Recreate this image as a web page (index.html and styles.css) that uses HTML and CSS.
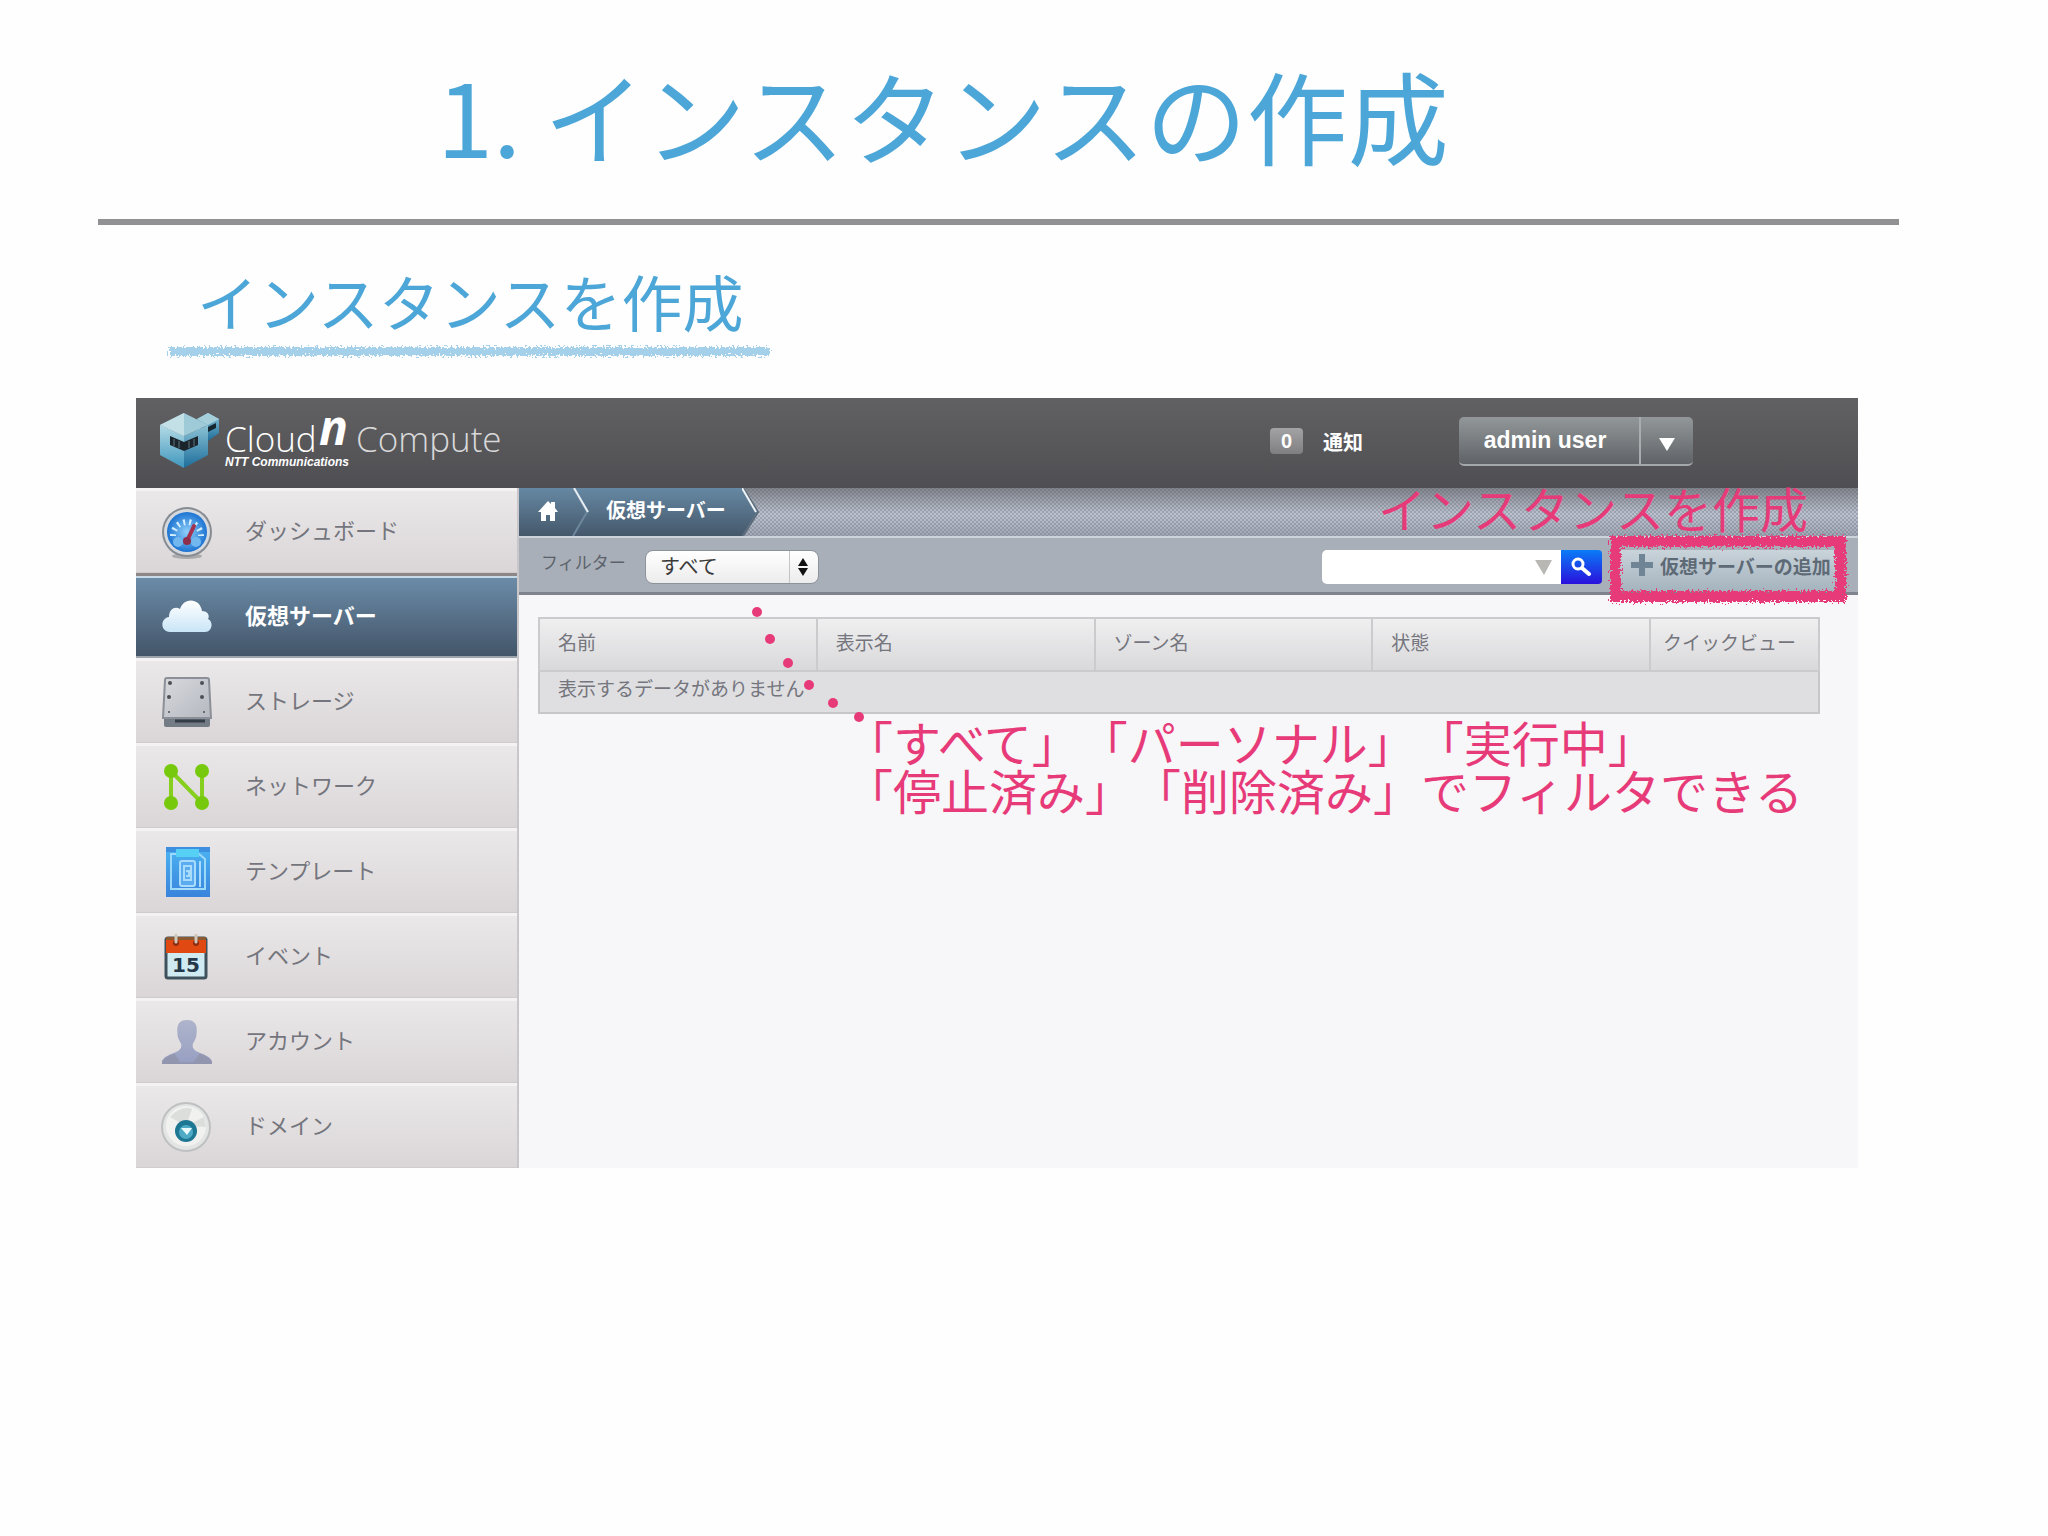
FILE: index.html
```html
<!DOCTYPE html>
<html lang="ja">

<head>
    <meta charset="UTF-8">
    <meta name="viewport" content="width=device-width, initial-scale=1.0">
    <title>1. インスタンスの作成</title>
    <link rel="stylesheet" href="styles.css">
</head>

<body>
    <!-- 手描き風の輪郭を作るフィルター -->
    <svg class="defs" width="0" height="0" aria-hidden="true">
        <filter id="crayon" x="-5%" y="-20%" width="110%" height="140%">
            <feTurbulence type="fractalNoise" baseFrequency="0.5" numOctaves="2" seed="4" result="noise" />
            <feDisplacementMap in="SourceGraphic" in2="noise" scale="11" xChannelSelector="R" yChannelSelector="G" />
        </filter>
    </svg>

    <main class="slide">
        <h1>1. インスタンスの作成</h1>
        <hr>
        <h2>インスタンスを作成</h2>

        <div class="panel">
            <header class="header">
                <div class="logo">
                    <svg class="cube" width="62" height="58" viewBox="0 0 62 58">
                        <defs>
                            <linearGradient id="cubeL" x1="0" y1="0" x2="0" y2="1">
                                <stop offset="0" stop-color="#b5dbe6" />
                                <stop offset="1" stop-color="#3f97bd" />
                            </linearGradient>
                            <linearGradient id="cubeR" x1="0" y1="0" x2="0" y2="1">
                                <stop offset="0" stop-color="#8cc3d6" />
                                <stop offset="1" stop-color="#1c6d9b" />
                            </linearGradient>
                        </defs>
                        <path d="M49 1 60 7v14l-11 8-11-8V7z" fill="url(#cubeR)" />
                        <path d="M49 1 60 7l-11 6-11-6z" fill="#a5cedb" />
                        <path d="M41 11l8 4 8-4v5l-8 4-8-4z" fill="#16262f" />
                        <path d="M1 13 25 24v32L1 43z" fill="url(#cubeL)" />
                        <path d="M49 13 25 24v32l24-13z" fill="url(#cubeR)" />
                        <path d="M25 1 49 13 25 24 1 13z" fill="#9fcbd8" />
                        <path d="M25 1 1 13l24 11z" fill="#c4e0e7" />
                        <path d="M11 24l14 6 14-6v9l-14 6-14-6z" fill="#1b242a" />
                        <path d="M15 27v7M20 29v7M30 29v7M35 27v7" stroke="#5f7782" stroke-width="1" />
                    </svg>
                    <div class="brand">
                        <span class="cloud">Cloud</span>
                        <span class="company">NTT Communications</span>
                    </div>
                    <span class="n">n</span>
                    <span class="product">Compute</span>
                </div>
                <div class="notice"><span class="count">0</span>通知</div>
                <div class="user">
                    <button type="button" class="user-name">admin user</button>
                    <button type="button" class="user-menu" aria-label="メニュー">
                        <svg width="16" height="14" viewBox="0 0 16 14"><path d="M0 1h16L8 14z" fill="#fff" /></svg>
                    </button>
                </div>
            </header>

            <div class="body">
                <nav class="sidebar">
                    <a href="#">
                        <svg width="52" height="54" viewBox="0 0 52 54">
                            <defs>
                                <radialGradient id="dial">
                                    <stop offset="0" stop-color="#8fd0fa" />
                                    <stop offset="1" stop-color="#1d74d2" />
                                </radialGradient>
                            </defs>
                            <ellipse cx="26" cy="51" rx="15" ry="3" fill="#aaa" />
                            <circle cx="26" cy="27" r="25" fill="#868b92" />
                            <circle cx="26" cy="27" r="23" fill="#d6dade" />
                            <circle cx="26" cy="27" r="20" fill="url(#dial)" />
                            <path d="M12 31a14 14 0 1 1 28 0" fill="none" stroke="#d3eeff" stroke-width="6" stroke-dasharray="2 4" />
                            <circle cx="17" cy="37" r="5" fill="#72b7ee" />
                            <circle cx="35" cy="37" r="5" fill="#72b7ee" />
                            <path d="M26 36l7-15" stroke="#a4324f" stroke-width="4" stroke-linecap="round" />
                            <circle cx="26" cy="36" r="4" fill="#8e2e4b" />
                        </svg>
                        <span>ダッシュボード</span>
                    </a>
                    <a href="#" class="active">
                        <svg width="52" height="34" viewBox="0 0 52 34">
                            <defs>
                                <linearGradient id="cloud" x1="0" y1="0" x2="0" y2="1">
                                    <stop offset="0" stop-color="#fff" />
                                    <stop offset="1" stop-color="#c9e5f7" />
                                </linearGradient>
                            </defs>
                            <path d="M9 33C-1 33-1 19 8 18 8 9 15 7 19 10 23-2 39-1 41 12c6 0 8 5 6 8 6 3 4 13-3 13z" fill="url(#cloud)" />
                        </svg>
                        <span>仮想サーバー</span>
                    </a>
                    <a href="#">
                        <svg width="52" height="52" viewBox="0 0 52 52">
                            <defs>
                                <linearGradient id="disk" x1="0" y1="0" x2="1" y2="1">
                                    <stop offset="0" stop-color="#d7d9dd" />
                                    <stop offset="1" stop-color="#b5b8c0" />
                                </linearGradient>
                            </defs>
                            <path d="M3 41h46v8q0 2-2 2H5q-2 0-2-2z" fill="#737b85" />
                            <path d="M6 2h40q2 0 2 2l2 38H2L4 4q0-2 2-2z" fill="url(#disk)" stroke="#8b8f97" stroke-width="2" />
                            <path d="M14 45h30" stroke="#343c46" stroke-width="3" />
                            <g fill="#4c5056">
                                <circle cx="9" cy="7" r="2" />
                                <circle cx="41" cy="7" r="2" />
                                <circle cx="8" cy="21" r="2" />
                                <circle cx="41" cy="21" r="2" />
                                <circle cx="8" cy="36" r="1" />
                                <circle cx="43" cy="36" r="1" />
                            </g>
                        </svg>
                        <span>ストレージ</span>
                    </a>
                    <a href="#">
                        <svg width="52" height="46" viewBox="0 0 52 46">
                            <path d="M10 39V7l31 32V7" fill="none" stroke="#86cf1f" stroke-width="4" />
                            <g fill="#76c90c">
                                <circle cx="10" cy="7" r="7" />
                                <circle cx="41" cy="7" r="7" />
                                <circle cx="10" cy="39" r="7" />
                                <circle cx="41" cy="39" r="7" />
                            </g>
                        </svg>
                        <span>ネットワーク</span>
                    </a>
                    <a href="#">
                        <svg width="52" height="52" viewBox="0 0 52 52">
                            <defs>
                                <linearGradient id="tpl" x1="0" y1="0" x2="0" y2="1">
                                    <stop offset="0" stop-color="#4bb4f2" />
                                    <stop offset="1" stop-color="#3a83dc" />
                                </linearGradient>
                            </defs>
                            <path d="M5 1h44v50H5z" fill="url(#tpl)" />
                            <path d="M5 1h44v5H5z" fill="#3f8fe0" />
                            <path d="M10 8h28l6 5v30H10z" fill="none" stroke="#9bd9fb" stroke-width="2" />
                            <path d="M15 3h23v8H15z" fill="#56d0f4" />
                            <rect x="19" y="15" width="15" height="25" rx="2" fill="#5aabf0" stroke="#a9dcfc" stroke-width="2" />
                            <path d="M23 20h7v14h-7zM25 25h3v5h-3M39 15v26M17 43h20" fill="none" stroke="#a9dcfc" stroke-width="2" />
                        </svg>
                        <span>テンプレート</span>
                    </a>
                    <a href="#">
                        <svg width="52" height="46" viewBox="0 0 52 46">
                            <rect x="5" y="4" width="40" height="40" rx="2" fill="#cfeaf0" stroke="#3e515c" stroke-width="3" />
                            <path d="M5 3h40v16H5z" fill="#e04a12" />
                            <path d="M5 3h40v3H5z" fill="#8b5a33" />
                            <circle cx="15" cy="9" r="3" fill="#8b2c10" />
                            <circle cx="35" cy="9" r="3" fill="#8b2c10" />
                            <path d="M15 8V1M35 8V1" stroke="#d0c6bc" stroke-width="3" stroke-linecap="round" />
                            <text x="25" y="38" text-anchor="middle" class="date">15</text>
                        </svg>
                        <span>イベント</span>
                    </a>
                    <a href="#">
                        <svg width="52" height="48" viewBox="0 0 54 50">
                            <defs>
                                <linearGradient id="man" x1="0" y1="0" x2="0" y2="1">
                                    <stop offset="0" stop-color="#aeb4cb" />
                                    <stop offset="1" stop-color="#979fc2" />
                                </linearGradient>
                            </defs>
                            <path d="M27 2c8 0 11 5 10 13 0 6-2 8-4 12-1 6 4 8 9 10 8 3 11 6 11 9v2H1v-2c0-3 3-6 11-9 5-2 10-4 9-10-2-4-4-6-4-12C16 7 19 2 27 2z" fill="url(#man)" />
                            <path d="M1 48v-3q4-5 13-8l6 9h14l6-9q9 3 13 8v3z" fill="#8d8fa2" opacity=".6" />
                        </svg>
                        <span>アカウント</span>
                    </a>
                    <a href="#">
                        <svg width="52" height="50" viewBox="0 0 52 50">
                            <circle cx="25" cy="25" r="24" fill="#e3e4e4" stroke="#bfc0c1" stroke-width="2" />
                            <circle cx="25" cy="24" r="20" fill="#f1f1f0" />
                            <path d="M25 24 9 15Q20 3 31 7zM25 24l18-9 2 10z" fill="#dcdedc" />
                            <circle cx="25" cy="29" r="11" fill="#1e7792" />
                            <circle cx="25" cy="30" r="7" fill="#4fabc5" />
                            <path d="M20 26h11l-5 7z" fill="#e9fafd" />
                        </svg>
                        <span>ドメイン</span>
                    </a>
                </nav>

                <section class="content">
                    <div class="breadcrumb">
                        <a href="#" class="home" aria-label="ホーム">
                            <svg width="20" height="20" viewBox="0 0 20 20">
                                <path d="M10 0l3 3V1h4v6l3 4h-3v9h-5v-6H8v6H3v-9H0z" fill="#fff" />
                            </svg>
                        </a>
                        <svg class="edge" width="17" height="48" viewBox="0 0 17 48">
                            <path d="M1 0l14 24L1 48" fill="none" stroke="#6d879c" stroke-width="2" />
                            <path d="M2 0l14 24" stroke="#e6eef4" stroke-width="2" />
                        </svg>
                        <a href="#" class="current">仮想サーバー</a>
                        <svg width="18" height="48" viewBox="0 0 18 48">
                            <defs>
                                <linearGradient id="crumb" x1="0" y1="0" x2="0" y2="1">
                                    <stop offset="0" stop-color="#6688a3" />
                                    <stop offset="1" stop-color="#45586b" />
                                </linearGradient>
                            </defs>
                            <path d="M0 0l15 24L0 48z" fill="url(#crumb)" />
                            <path d="M1 0l15 24L1 48" fill="none" stroke="#5a6b7b" stroke-width="2" />
                            <path d="M0 0l14 24" stroke="#eef4f8" stroke-width="2" />
                        </svg>
                    </div>

                    <form class="toolbar">
                        <label for="filter">フィルター</label>
                        <div class="select">
                            <select id="filter">
                                <option>すべて</option>
                                <option>パーソナル</option>
                                <option>実行中</option>
                                <option>停止済み</option>
                                <option>削除済み</option>
                            </select>
                            <svg width="10" height="18" viewBox="0 0 10 18"><path d="M0 8l5-8 5 8zM0 10h10l-5 8z" fill="#111" /></svg>
                        </div>
                        <div class="search">
                            <input type="text" aria-label="検索">
                            <svg class="more" width="17" height="15" viewBox="0 0 17 15"><path d="M0 0h17L9 15z" fill="#b9b7b4" /></svg>
                            <button type="submit" aria-label="検索する">
                                <svg width="20" height="20" viewBox="0 0 20 20" fill="none" stroke="#fff">
                                    <circle cx="7" cy="7" r="5" stroke-width="3" />
                                    <path d="M11 11l7 6" stroke-width="4" stroke-linecap="round" />
                                </svg>
                            </button>
                        </div>
                        <button type="button" class="add">
                            <svg width="24" height="24" viewBox="0 0 24 24"><path d="M9 1h6v8h8v6h-8v8H9v-8H1V9h8z" fill="#6f8596" /></svg>
                            仮想サーバーの追加
                        </button>
                    </form>

                    <table>
                        <thead>
                            <tr>
                                <th>名前</th>
                                <th>表示名</th>
                                <th>ゾーン名</th>
                                <th>状態</th>
                                <th class="quick">クイックビュー</th>
                            </tr>
                        </thead>
                        <tbody>
                            <tr>
                                <td colspan="5">表示するデータがありません</td>
                            </tr>
                        </tbody>
                    </table>
                </section>
            </div>

            <!-- 説明用の書き込み -->
            <p class="note note-add">インスタンスを作成</p>
            <div class="frame"></div>
            <svg class="dots" width="114" height="116" viewBox="0 0 114 116" fill="#e73b79">
                <circle cx="6" cy="6" r="5" />
                <circle cx="19" cy="33" r="5" />
                <circle cx="37" cy="57" r="5" />
                <circle cx="58" cy="79" r="5" />
                <circle cx="82" cy="97" r="5" />
                <circle cx="108" cy="111" r="5" />
            </svg>
            <p class="note note-filter">「すべて」「パーソナル」「実行中」<br>「停止済み」「削除済み」でフィルタできる</p>
        </div>
    </main>
</body>

</html>
```

FILE: styles.css
```css
* {
    margin: 0;
    padding: 0;
    box-sizing: border-box;
}

body {
    background: #fefefe;
    font-family: "Liberation Sans", "Noto Sans CJK JP", sans-serif;
    color: #74757d;
}

a {
    color: inherit;
    text-decoration: none;
}

button,
input,
select {
    font: inherit;
    color: inherit;
    border: 0;
}

svg {
    display: block;
    flex: none;
}

.defs {
    position: absolute;
}

/* スライド */
.slide {
    padding: 54px 149px 0 98px;
}

h1,
h2,
.note {
    font-family: "Noto Sans CJK JP", sans-serif;
    font-weight: 400;
    white-space: nowrap;
    text-spacing-trim: space-all;
}

h1 {
    padding-left: 339px;
    font-size: 101px;
    line-height: 120px;
    color: #4da6d8;
}

hr {
    height: 6px;
    margin-top: 45px;
    border: 0;
    background: #919193;
}

h2 {
    width: 600px;
    margin: 46px 0 0 71px;
    padding-left: 28px;
    font-size: 61px;
    line-height: 60px;
    color: #4da6d8;
}

h2::after {
    content: "";
    display: block;
    height: 9px;
    margin: 16px 0 0 -28px;
    background: #a5d0ea;
    filter: url(#crayon);
}

.panel {
    position: relative;
    margin: 42px 41px 0 38px;
}

/* ヘッダー */
.header {
    display: flex;
    align-items: center;
    height: 90px;
    padding: 0 165px 4px 0;
    background: linear-gradient(#616163, #4f4f53);
    color: #fff;
}

.logo {
    display: flex;
    align-items: flex-start;
    height: 58px;
    margin-right: auto;
    padding-left: 23px;
    font-family: "Open Sans", sans-serif;
    white-space: nowrap;
}

.brand {
    width: 94px;
    margin-left: 4px;
}

.cloud,
.product {
    display: block;
    height: 44px;
    font-size: 35px;
    font-weight: 300;
    line-height: 54px;
}

.company {
    display: block;
    font: italic bold 12px/12px "Liberation Sans", sans-serif;
}

.n {
    margin-right: 8px;
    font-size: 48px;
    font-style: italic;
    font-weight: 700;
    line-height: 30px;
}

.product {
    color: #d9d9da;
}

.notice {
    display: flex;
    align-items: center;
    gap: 20px;
    margin-right: 96px;
    font-size: 20px;
    font-weight: 700;
}

.count {
    width: 33px;
    line-height: 26px;
    border-radius: 4px;
    background: linear-gradient(#a3a3a5, #7f7f82);
    text-align: center;
}

.user {
    display: flex;
    height: 49px;
    border-bottom: 2px solid #a4a8aa;
    border-radius: 5px;
    background: linear-gradient(#929799, #5f6367);
}

.user button {
    display: flex;
    align-items: center;
    justify-content: center;
    background: none;
}

.user .user-name {
    width: 180px;
    padding-right: 8px;
    font-size: 23px;
    font-weight: 700;
}

.user .user-menu {
    width: 54px;
    padding-top: 8px;
    border-left: 2px solid #a9adaf;
}

.body {
    display: flex;
}

/* サイドメニュー */
.sidebar {
    width: 383px;
    border-right: 2px solid #c9c7c9;
}

.sidebar a {
    display: flex;
    align-items: center;
    height: 85px;
    padding-left: 25px;
    border-top: 3px solid #f4f2f2;
    border-bottom: 1px solid #cfcccd;
    background: linear-gradient(#ebe8e9, #dad6d7);
    font-size: 22px;
}

.sidebar a span {
    margin-left: 32px;
    padding-bottom: 5px;
}

.sidebar .active {
    border-top: 3px solid #8e8788;
    border-bottom: 2px solid #9da3aa;
    background: linear-gradient(#6c8da9, #435569);
    box-shadow: inset 0 2px #c8dae8;
    color: #fff;
    font-weight: 700;
}

.date {
    font: bold 20px "DejaVu Sans", sans-serif;
    fill: #24384a;
}

/* コンテンツ */
.content {
    flex: 1;
    background: #f7f6f8;
}

.breadcrumb {
    display: flex;
    height: 48px;
    /* 細かい網目模様 */
    background:
        radial-gradient(circle, rgba(70, 80, 95, 0.25) 1px, transparent 1px) 0 0 / 4px 4px,
        radial-gradient(circle, rgba(70, 80, 95, 0.25) 1px, transparent 1px) 2px 2px / 4px 4px,
        linear-gradient(#83858c, #bdc3d0 55%, #a1a7b4);
}

.home,
.current,
.edge {
    background: linear-gradient(#6688a3, #45586b);
}

.home {
    width: 53px;
    padding: 13px 0 0 19px;
}

.current {
    padding: 0 16px 0 17px;
    color: #fff;
    font-size: 20px;
    font-weight: 700;
    line-height: 46px;
}

.toolbar {
    display: flex;
    height: 59px;
    padding: 12px 20px 0 22px;
    border-top: 2px solid #cdd3db;
    border-bottom: 3px solid #7f838e;
    background: #a8afb8;
}

.toolbar label {
    width: 104px;
    font-size: 17px;
    line-height: 28px;
    color: #5c626b;
}

.select {
    position: relative;
    width: 174px;
    height: 34px;
}

.select select {
    width: 100%;
    height: 100%;
    padding-left: 14px;
    border: 1px solid #8d939b;
    border-radius: 8px;
    appearance: none;
    background: linear-gradient(90deg, transparent 143px, #c4c4c4 143px, #c4c4c4 144px, transparent 144px), linear-gradient(#fff, #ececec);
    color: #3a3a3a;
    font-size: 20px;
}

.select svg {
    position: absolute;
    top: 8px;
    right: 11px;
    pointer-events: none;
}

.search {
    position: relative;
    display: flex;
    height: 34px;
    margin-left: auto;
}

.search input {
    width: 239px;
    padding: 0 36px 0 10px;
    border-radius: 5px 0 0 5px;
    background: #fff;
}

.search .more {
    position: absolute;
    top: 10px;
    right: 50px;
}

.search button {
    width: 41px;
    padding: 0 10px;
    border-radius: 0 4px 4px 0;
    background: linear-gradient(#0a7cf7, #2a10dc);
}

.add {
    display: flex;
    align-items: center;
    gap: 6px;
    width: 218px;
    height: 40px;
    margin-left: 18px;
    padding: 0 0 10px 10px;
    background: linear-gradient(#c9d3da, #a5b4be);
    color: #5e6a76;
    font-size: 19px;
    font-weight: 700;
    white-space: nowrap;
}

table {
    width: calc(100% - 57px);
    margin: 22px 0 0 19px;
    border: 2px solid #c7c7c9;
    border-collapse: collapse;
    table-layout: fixed;
    font-size: 19px;
    text-align: left;
}

th {
    height: 53px;
    padding: 0 0 7px 18px;
    border: 2px solid #cbcbcd;
    background: linear-gradient(#efeff0, #d9d9db);
    font-weight: 400;
}

.quick {
    width: 169px;
    padding-left: 12px;
}

td {
    height: 42px;
    padding: 0 0 10px 18px;
    background: #dfdfe1;
}

/* 書き込み */
.note {
    position: absolute;
    font-size: 48px;
    line-height: 48px;
    color: #e73b79;
}

.note-add {
    top: 85px;
    right: 50px;
}

.note-filter {
    top: 319px;
    left: 709px;
}

.frame {
    position: absolute;
    top: 138px;
    right: 12px;
    width: 236px;
    height: 66px;
    border: 11px solid #e73b79;
    filter: url(#crayon);
}

.dots {
    position: absolute;
    top: 208px;
    left: 615px;
}
```
